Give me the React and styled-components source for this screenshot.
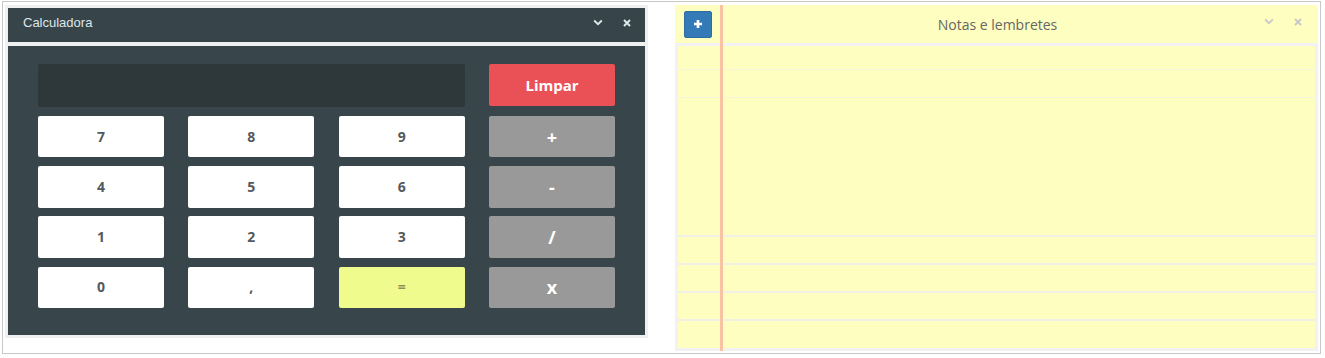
import React from "react";
import styled, { createGlobalStyle } from "styled-components";

const Global = createGlobalStyle`
  html, body { margin: 0; padding: 0; background: #ffffff; }
  * { box-sizing: border-box; }
`;

const Frame = styled.div`
  margin: 1px 0 0 2px;
  width: 1319px;
  height: 353px;
  border: 1px solid #c8c8c8;
  padding: 3px 2px 2px 2px;
  display: flex;
  align-items: flex-start;
  gap: 27px;
`;

const CalcPanel = styled.section`
  width: 643px;
  height: 333px;
  background: #eef0f1;
  padding: 3px;
  display: flex;
  flex-direction: column;
  gap: 4px;
`;

const CalcHeader = styled.header`
  height: 34px;
  background: #37454a;
  display: flex;
  align-items: center;
  padding: 0 12px 0 15px;
  color: #dfe6e9;
  font-family: "Liberation Sans", Arial, sans-serif;
  font-size: 13px;
`;

const Title = styled.span`
  flex: 1;
  margin-top: -6px;
`;

const HeaderIcons = styled.div`
  display: flex;
  align-items: center;
  gap: 17px;
  margin-top: -5px;
  color: ${(p) => p.$color};
`;

const IconBox = styled.span`
  display: inline-flex;
  width: 12px;
  height: 12px;
  align-items: center;
  justify-content: center;
`;

const CalcBody = styled.div`
  flex: 1;
  background: #38464b;
  padding: 18px 30px 0 30px;
  display: grid;
  grid-template-columns: repeat(4, 1fr);
  grid-template-rows: 43px repeat(4, 41.5px);
  column-gap: 24.3px;
  row-gap: 8.8px;
  align-content: start;
`;

const Display = styled.div`
  grid-column: span 3;
  background: #2e3739;
  border-radius: 2px;
`;

const variants = {
  num: { bg: "#ffffff", color: "#555a5c", size: "14px" },
  op: { bg: "#999999", color: "#ffffff", size: "18px" },
  clear: { bg: "#ea5157", color: "#ffffff", size: "15px" },
  eq: { bg: "#f0fb8e", color: "#8c925c", size: "14px" },
};

const Key = styled.button`
  border: none;
  border-radius: 2px;
  margin: 0;
  padding: 0;
  height: ${(p) => (p.$v === "clear" ? "42px" : "100%")};
  background: ${(p) => variants[p.$v].bg};
  color: ${(p) => variants[p.$v].color};
  font-family: "Open Sans", "Noto Sans", sans-serif;
  font-weight: 700;
  font-size: ${(p) => variants[p.$v].size};
  display: flex;
  align-items: center;
  justify-content: center;
  line-height: 1;
`;

const NotesPanel = styled.section`
  position: relative;
  width: 643px;
  height: 346px;
  background: #f2f2f2;
  display: flex;
  flex-direction: column;
  gap: 3px;
`;

const NotesHeader = styled.header`
  height: 38px;
  background: #fefec0;
  display: flex;
  align-items: center;
  padding: 0 14px 0 9px;
`;

const AddButton = styled.button`
  width: 28px;
  height: 27px;
  margin: 0;
  padding: 0;
  background: #337ab7;
  border: 1px solid #2e6da4;
  border-radius: 2px;
  display: flex;
  align-items: center;
  justify-content: center;
`;

const NotesTitle = styled.span`
  flex: 1;
  text-align: center;
  font-family: "Open Sans", "Noto Sans", sans-serif;
  font-size: 14px;
  color: #666666;
  margin-left: 20px;
  margin-top: 1px;
`;

const NotesBody = styled.div`
  flex: 1;
  margin: 0 3px 3px 3px;
  background: #fefec0;
  display: flex;
  flex-direction: column;
`;

const Line = styled.div`
  height: ${(p) => p.$h}px;
  flex: none;
  border-bottom: ${(p) =>
    p.$line === "strong"
      ? "2px solid #f0f0e6"
      : p.$line === "faint"
      ? "1px solid #f6f6dc"
      : "none"};
`;

const Margin = styled.div`
  position: absolute;
  left: 45px;
  top: 0;
  bottom: 0;
  width: 3px;
  background: #f9c3a3;
`;

const Chevron = () => (
  <svg width="10" height="7" viewBox="0 0 10 7">
    <path d="M1.2 1.5 L5 5.2 L8.8 1.5" fill="none" stroke="currentColor" strokeWidth="1.9" />
  </svg>
);

const Cross = () => (
  <svg width="8" height="8" viewBox="0 0 8 8">
    <path d="M1 1 L7 7 M7 1 L1 7" fill="none" stroke="currentColor" strokeWidth="2" />
  </svg>
);

const Plus = () => (
  <svg width="10" height="10" viewBox="0 0 10 10">
    <path d="M5 1 V9 M1 5 H9" fill="none" stroke="#ffffff" strokeWidth="2.6" />
  </svg>
);

const keys = [
  ["7", "num"], ["8", "num"], ["9", "num"], ["+", "op"],
  ["4", "num"], ["5", "num"], ["6", "num"], ["-", "op"],
  ["1", "num"], ["2", "num"], ["3", "num"], ["/", "op"],
  ["0", "num"], [",", "num"], ["=", "eq"], ["x", "op"],
];

const lines = [
  { h: 24, line: "faint" },
  { h: 28, line: "faint" },
  { h: 139, line: "strong" },
  { h: 28, line: "strong" },
  { h: 28, line: "strong" },
  { h: 28, line: "strong" },
  { h: 27, line: "none" },
];

export default function App() {
  return (
    <>
      <Global />
      <Frame>
        <CalcPanel>
          <CalcHeader>
            <Title>Calculadora</Title>
            <HeaderIcons $color="#dfe6e9">
              <IconBox><Chevron /></IconBox>
              <IconBox><Cross /></IconBox>
            </HeaderIcons>
          </CalcHeader>
          <CalcBody>
            <Display />
            <Key $v="clear">Limpar</Key>
            {keys.map(([label, v], i) => (
              <Key key={i} $v={v}>{label}</Key>
            ))}
          </CalcBody>
        </CalcPanel>
        <NotesPanel>
          <NotesHeader>
            <AddButton><Plus /></AddButton>
            <NotesTitle>Notas e lembretes</NotesTitle>
            <HeaderIcons $color="#c9c9c9">
              <IconBox><Chevron /></IconBox>
              <IconBox><Cross /></IconBox>
            </HeaderIcons>
          </NotesHeader>
          <NotesBody>
            {lines.map((l, i) => (
              <Line key={i} $h={l.h} $line={l.line} />
            ))}
          </NotesBody>
          <Margin />
        </NotesPanel>
      </Frame>
    </>
  );
}
